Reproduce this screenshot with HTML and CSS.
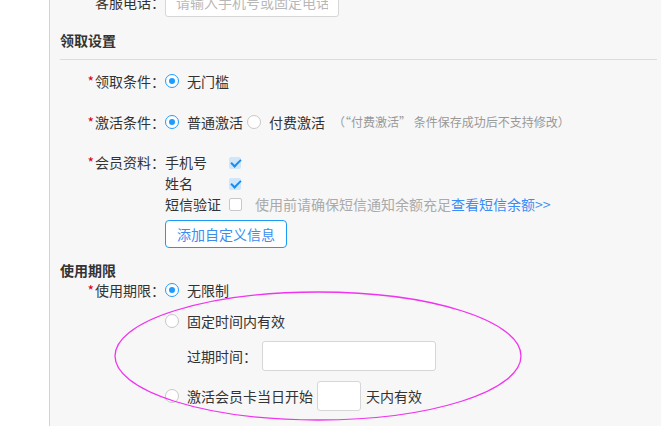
FILE: index.html
```html
<!DOCTYPE html>
<html lang="zh-CN">
<head>
    <meta charset="UTF-8">
    <title>会员卡设置</title>
    <link rel="stylesheet" href="styles.css">
</head>
<body>
<div class="page">
    <div class="gutter"></div>
    <div class="main">
        <div class="row row-top">
            <span class="lbl">客服电话：</span>
            <input class="ipt ipt-phone" type="text" placeholder="请输入手机号或固定电话">
        </div>

        <h3 class="sec sec-line">领取设置</h3>

        <div class="row row-get">
            <span class="lbl"><i>*</i>领取条件：</span>
            <span class="radio on"></span><span class="opt">无门槛</span>
        </div>

        <div class="row row-act">
            <span class="lbl"><i>*</i>激活条件：</span>
            <span class="radio on"></span><span class="opt">普通激活</span>
            <span class="radio radio-2"></span><span class="opt">付费激活</span>
            <span class="note">（“付费激活” 条件保存成功后不支持修改）</span>
        </div>

        <div class="row row-info">
            <span class="lbl"><i>*</i>会员资料：</span>
            <div class="fields">
                <div class="field"><span class="fname">手机号</span><span class="check on"></span></div>
                <div class="field"><span class="fname">姓名</span><span class="check on"></span></div>
                <div class="field">
                    <span class="fname">短信验证</span><span class="check"></span>
                    <span class="tip">使用前请确保短信通知余额充足<a href="#">查看短信余额&gt;&gt;</a></span>
                </div>
                <button class="btn-add">添加自定义信息</button>
            </div>
        </div>

        <h3 class="sec sec-use">使用期限</h3>

        <div class="row row-use">
            <span class="lbl"><i>*</i>使用期限：</span>
            <div class="opts">
                <div class="opt-row"><span class="radio on"></span><span class="opt">无限制</span></div>
                <div class="opt-row opt-fixed"><span class="radio"></span><span class="opt">固定时间内有效</span></div>
                <div class="opt-row opt-sub">
                    <span class="sub-lbl">过期时间：</span>
                    <input class="ipt ipt-date" type="text">
                </div>
                <div class="opt-row opt-days">
                    <span class="radio"></span><span class="opt">激活会员卡当日开始</span>
                    <input class="ipt ipt-days" type="text">
                    <span class="opt">天内有效</span>
                </div>
            </div>
        </div>
    </div>

    <!-- annotation drawn over the form -->
    <svg class="mark" width="409" height="131" viewBox="0 0 409 131">
        <ellipse cx="204" cy="65" rx="203" ry="64" fill="none" stroke="#f033f0" stroke-width="1.3"/>
    </svg>
</div>
</body>
</html>
```

FILE: styles.css
```css
body {
    margin: 0;
    font-family: "Noto Sans CJK SC", "Noto Sans", sans-serif;
    font-size: 14px;
    color: #333;
}

.page {
    position: relative;
    display: flex;
    height: 426px;
    overflow: hidden;
    background: #fff;
}

.gutter {
    width: 49px;
    flex: none;
}

.main {
    flex: 1;
    border-left: 1px solid #d3d3d3;
    background: #f7f7f7;
    padding: 0 4px 0 10px;
}

.row {
    display: flex;
    align-items: center;
    line-height: 20px;
}

.lbl {
    width: 105px;
    flex: none;
    text-align: right;
    color: #333;
}

.lbl i {
    font-style: normal;
    color: #d9001b;
    margin-right: 1px;
}

.ipt {
    box-sizing: border-box;
    height: 30px;
    border: 1px solid #d6d6d6;
    border-radius: 3px;
    background: #fff;
    font-family: inherit;
    font-size: 14px;
    padding: 0 10px;
    outline: none;
}

.ipt::placeholder {
    color: #b8b8b8;
}

.row-top {
    margin-top: -13px;
}

.ipt-phone {
    width: 174px;
}

.sec {
    margin: 0;
    font-size: 14px;
    font-weight: bold;
    line-height: 20px;
    color: #333;
}

.sec-line {
    margin-top: 13px;
    padding-bottom: 9px;
    border-bottom: 1px solid #dcdcdc;
}

.radio {
    box-sizing: border-box;
    width: 14px;
    height: 14px;
    flex: none;
    border: 1px solid #c8c8c8;
    border-radius: 50%;
    background: #fff;
    margin-right: 8px;
    display: flex;
    align-items: center;
    justify-content: center;
}

.radio.on {
    border: 1.5px solid #1e9bff;
}

.radio.on::after {
    content: "";
    width: 6px;
    height: 6px;
    border-radius: 50%;
    background: #1e9bff;
}

.radio-2 {
    margin-left: 4px;
}

.opt {
    color: #333;
}

.note {
    font-size: 12px;
    color: #999;
    margin-left: 8px;
}

.row-get {
    margin-top: 11px;
}

.row-act {
    margin-top: 21px;
}

.row-info {
    margin-top: 20px;
    align-items: flex-start;
    line-height: 21px;
}

.fields {
    display: flex;
    flex-direction: column;
    align-items: flex-start;
}

.field {
    display: flex;
    align-items: center;
    height: 21px;
}

.fname {
    width: 64px;
}

.check {
    box-sizing: border-box;
    width: 13px;
    height: 13px;
    border: 1px solid #c8c8c8;
    border-radius: 2px;
    background: #fff;
    position: relative;
}

.check.on {
    border: none;
    width: 12px;
    height: 12px;
    background: #cfe6fb;
}

.check.on::after {
    content: "";
    position: absolute;
    left: 4px;
    top: 0px;
    width: 4px;
    height: 8px;
    border: solid #1a8cf0;
    border-width: 0 2px 2px 0;
    transform: rotate(45deg);
}

.tip {
    margin-left: 13px;
    color: #aaa;
}

.tip a {
    color: #3b8cf5;
    text-decoration: none;
}

.btn-add {
    margin-top: 5px;
    width: 122px;
    height: 28px;
    border: 1px solid #1a9cf5;
    border-radius: 4px;
    background: #fff;
    color: #3a8ef0;
    font-family: inherit;
    font-size: 14px;
    padding: 0;
    cursor: pointer;
}

.sec-use {
    margin-top: 12px;
}

.row-use {
    align-items: flex-start;
}

.opts {
    display: flex;
    flex-direction: column;
}

.opt-row {
    display: flex;
    align-items: center;
    height: 20px;
}

.opt-fixed {
    margin-top: 11px;
}

.opt-sub {
    margin-top: 10px;
    height: 30px;
    padding-left: 22px;
}

.sub-lbl {
    width: 75px;
}

.ipt-date {
    width: 174px;
}

.opt-days {
    margin-top: 10px;
    height: 30px;
}

.ipt-days {
    width: 44px;
    margin: 0 5px 0 4px;
}

.mark {
    position: absolute;
    left: 114px;
    top: 291px;
}
```
